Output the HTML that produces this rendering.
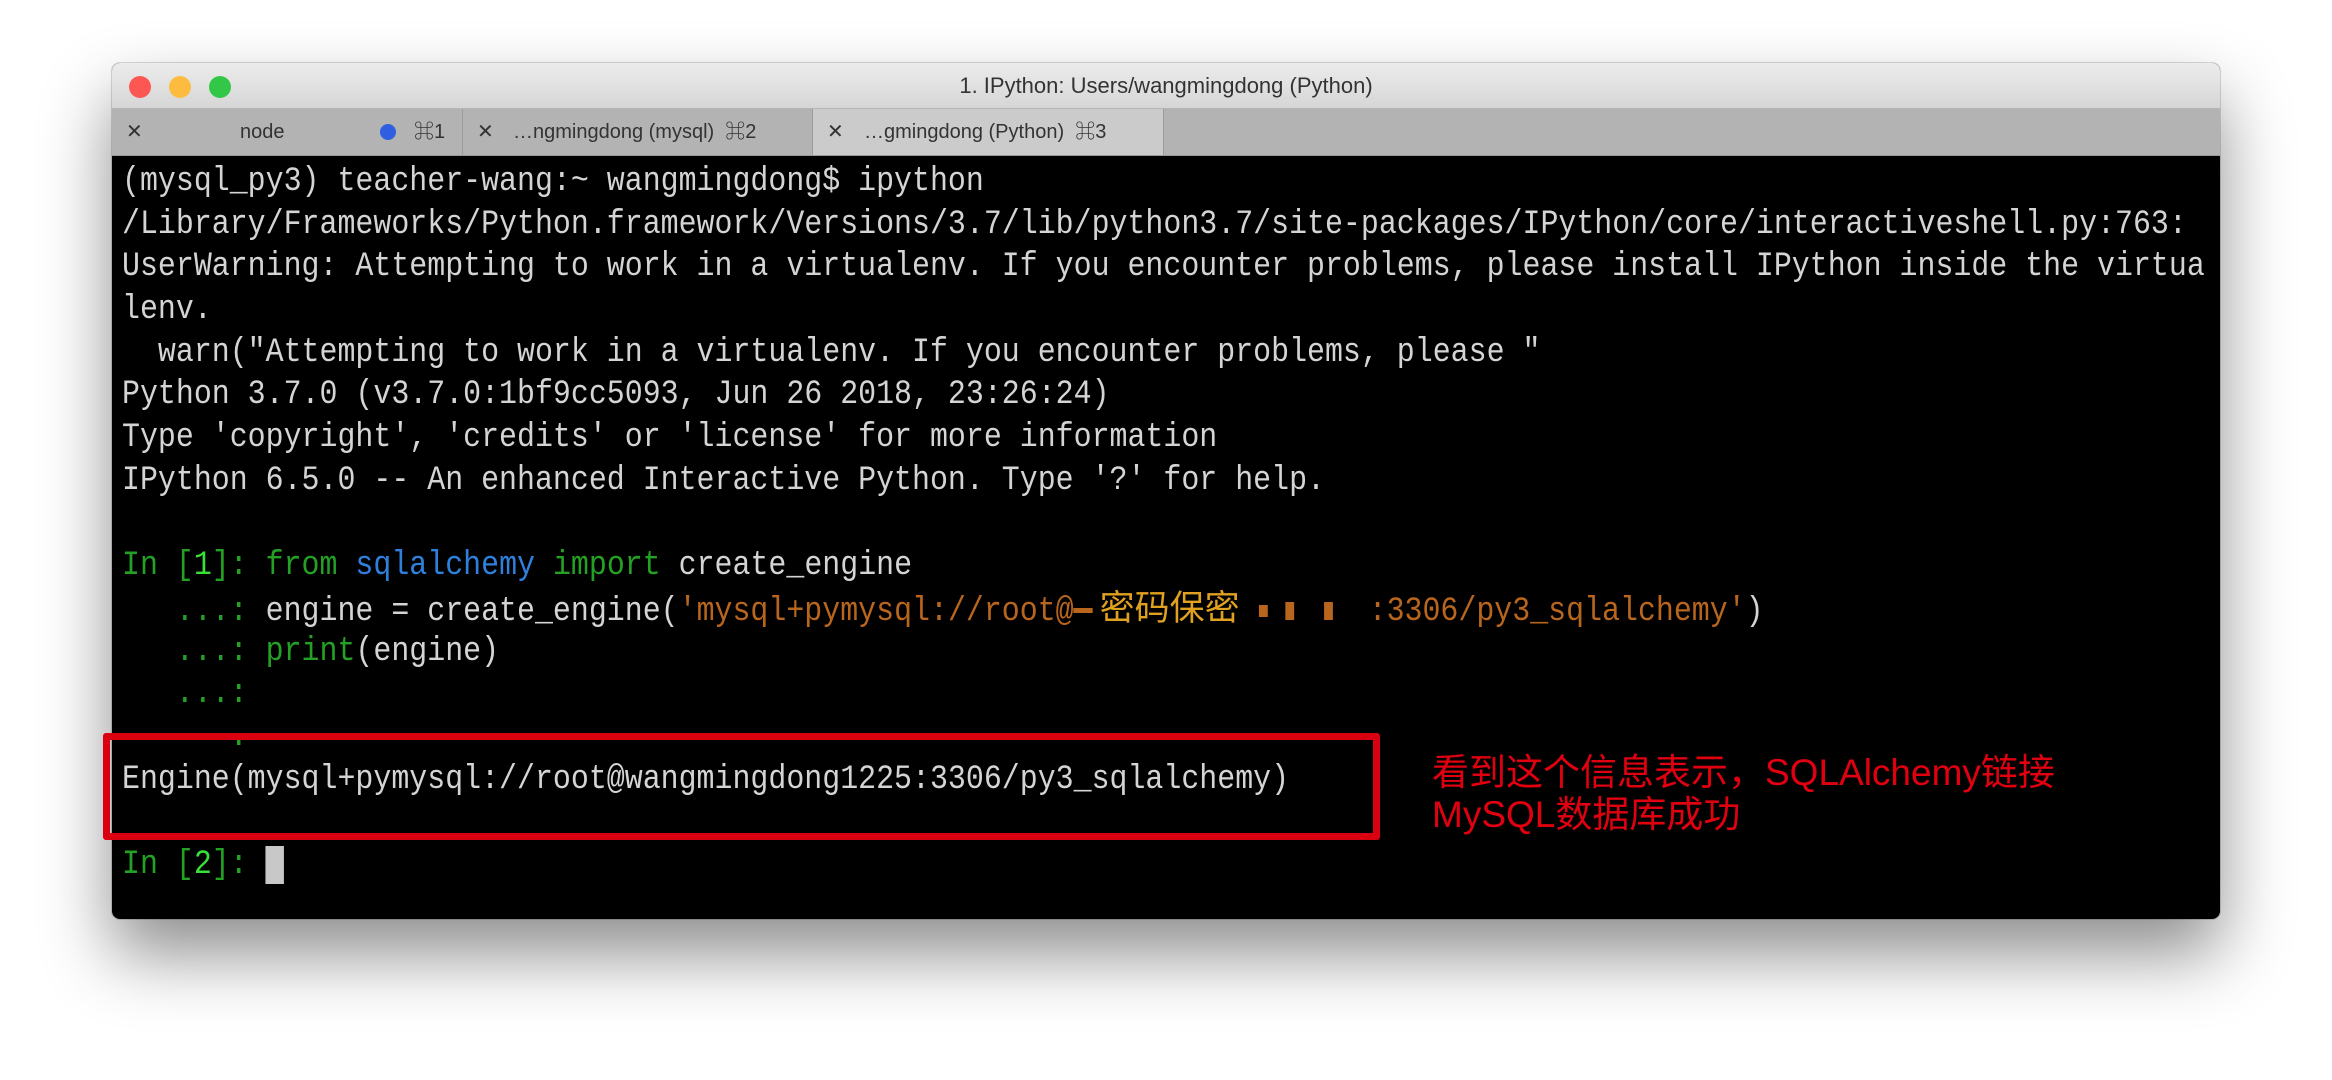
<!DOCTYPE html>
<html><head><meta charset="utf-8"><style>
body{margin:0;width:2332px;height:1080px;background:#fff;position:relative;overflow:hidden;font-family:"Liberation Sans","Noto Sans CJK SC",sans-serif}
.win{position:absolute;left:112px;top:63px;width:2108px;height:856px;border-radius:8px;background:#000;box-shadow:0 35px 70px rgba(0,0,0,.45),0 0 0 1px rgba(0,0,0,.15);overflow:hidden}
.title{position:absolute;left:0;top:0;width:100%;height:45px;background:linear-gradient(#ececec,#d6d6d6);text-align:center;font-size:22px;line-height:45px;color:#333;border-bottom:1px solid #b5b5b5}
.dot{position:absolute;top:13px;width:22px;height:22px;border-radius:50%}
.tabs{position:absolute;left:0;top:46px;width:100%;height:46px;background:#b3b3b3;border-bottom:1px solid #999}
.tab{position:absolute;top:0;height:46px;font-size:20px;line-height:46px;color:#333;border-right:1px solid #9c9c9c}
.term{position:absolute;left:10px;top:98px;width:2400px;font-family:"Liberation Mono",monospace;font-size:34px;color:#d4d4d4;transform:scaleX(0.88);transform-origin:0 0}
.term div{height:42.7px;line-height:42.7px;white-space:pre}
.g{color:#24a024}.G{color:#38e038}.b{color:#2f80dc}.o{color:#b8661e}
.cj{color:#e0a020;font-family:"Noto Sans CJK SC",sans-serif;font-size:35px;line-height:1;display:inline-block;transform:scaleX(1.136);transform-origin:0 50%;width:160px}
.m{display:inline-block;width:10px;height:12px;background:#b8661e;vertical-align:middle}
.box{position:absolute;left:103px;top:733px;width:1263px;height:93px;border:7px solid #d9000f;border-radius:3px}
.note{position:absolute;left:1432px;top:752px;font-size:37px;line-height:42px;color:#e0000f;font-family:"Liberation Sans","Noto Sans CJK SC",sans-serif}
</style></head><body>
<div class="win">
<div class="title">1. IPython: Users/wangmingdong (Python)
<div class="dot" style="left:17px;background:#fc5753"></div>
<div class="dot" style="left:57px;background:#fdbc40"></div>
<div class="dot" style="left:97px;background:#33c748"></div>
</div>
<div class="tabs">
<div class="tab" style="left:0;width:350px"><span style="position:absolute;left:14px">✕</span><span style="position:absolute;left:128px">node</span><span style="position:absolute;left:268px;top:15px;width:16px;height:16px;border-radius:50%;background:#2f5fe0"></span><span style="position:absolute;left:302px">⌘1</span></div>
<div class="tab" style="left:351px;width:349px"><span style="position:absolute;left:14px">✕</span><span style="position:absolute;left:50px">…ngmingdong (mysql)&nbsp;&nbsp;⌘2</span></div>
<div class="tab" style="left:701px;width:350px;background:#cbcbcb"><span style="position:absolute;left:14px">✕</span><span style="position:absolute;left:51px">…gmingdong (Python)&nbsp;&nbsp;⌘3</span></div>
</div>
<div class="term"><div>(mysql_py3) teacher-wang:~ wangmingdong$ ipython</div><div>/Library/Frameworks/Python.framework/Versions/3.7/lib/python3.7/site-packages/IPython/core/interactiveshell.py:763:</div><div>UserWarning: Attempting to work in a virtualenv. If you encounter problems, please install IPython inside the virtua</div><div>lenv.</div><div>  warn("Attempting to work in a virtualenv. If you encounter problems, please "</div><div>Python 3.7.0 (v3.7.0:1bf9cc5093, Jun 26 2018, 23:26:24)</div><div>Type 'copyright', 'credits' or 'license' for more information</div><div>IPython 6.5.0 -- An enhanced Interactive Python. Type '?' for help.</div><div> </div><div><span class="g">In [</span><span class="G">1</span><span class="g">]: from </span><span class="b">sqlalchemy</span><span class="g"> import</span> create_engine</div><div><span class="g">   ...:</span> engine = create_engine(<span class="o">'mysql+pymysql://root@</span><span class="m" style="width:22px;height:5px;margin-right:8px"></span><span class="cj">密码保密</span> <span class="m"></span><span class="m" style="margin-left:20px;height:18px"></span><span class="m" style="margin-left:34px;height:18px"></span>  <span class="o">:3306/py3_sqlalchemy'</span>)</div><div><span class="g">   ...:</span> <span class="g">print</span>(engine)</div><div><span class="g">   ...:</span></div><div><span class="g">      .</span></div><div>Engine(mysql+pymysql://root@wangmingdong1225:3306/py3_sqlalchemy)</div><div> </div><div><span class="g">In [</span><span class="G">2</span><span class="g">]:</span> <span style="background:#c8c8c8"> </span></div></div>
</div>
<div class="box"></div>
<div class="note">看到这个信息表示，SQLAlchemy链接<br>MySQL数据库成功</div>
</body></html>
